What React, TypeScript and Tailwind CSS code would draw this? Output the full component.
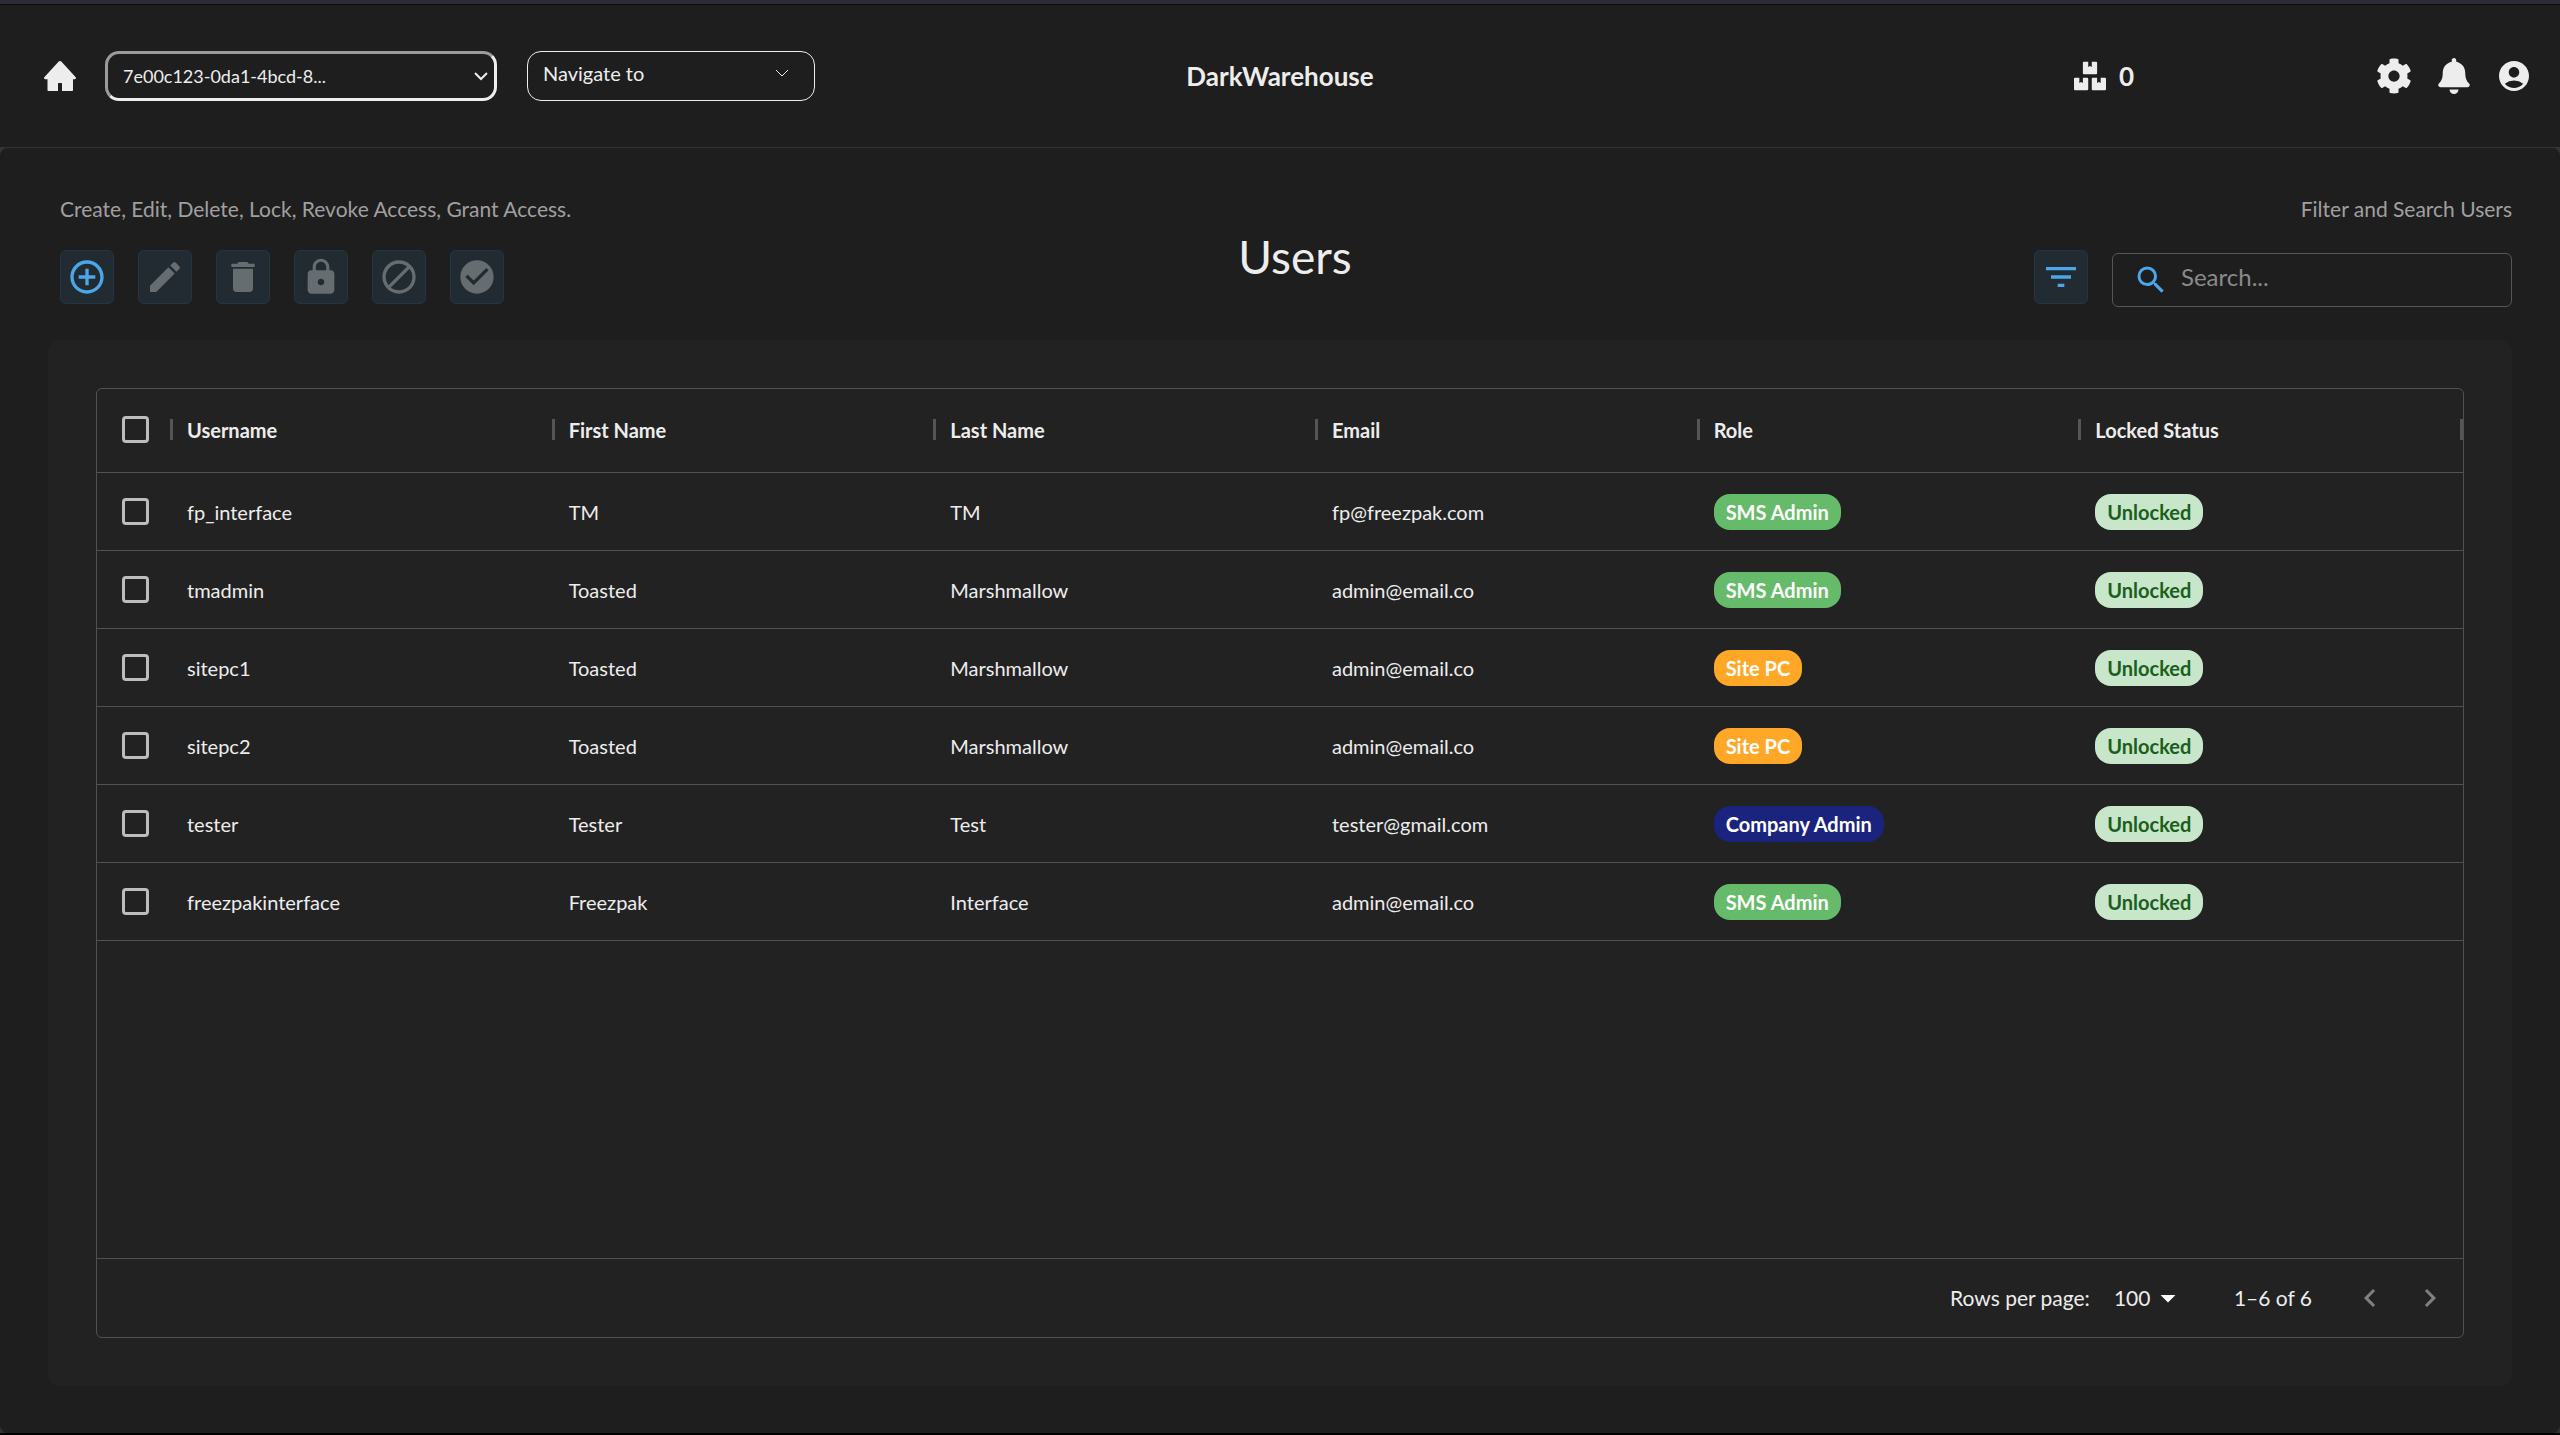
import type { ReactNode } from "react";
import {
  MdAccountCircle,
  MdAddCircleOutline,
  MdArrowDropDown,
  MdBlock,
  MdCheckCircle,
  MdDelete,
  MdEdit,
  MdFilterList,
  MdKeyboardArrowLeft,
  MdKeyboardArrowRight,
  MdLock,
  MdSearch,
} from "react-icons/md";
import { FaBell, FaBoxes, FaCog } from "react-icons/fa";

type Role = "SMS Admin" | "Site PC" | "Company Admin";

interface User {
  username: string;
  firstName: string;
  lastName: string;
  email: string;
  role: Role;
}

const users: User[] = [
  { username: "fp_interface", firstName: "TM", lastName: "TM", email: "fp@freezpak.com", role: "SMS Admin" },
  { username: "tmadmin", firstName: "Toasted", lastName: "Marshmallow", email: "admin@email.co", role: "SMS Admin" },
  { username: "sitepc1", firstName: "Toasted", lastName: "Marshmallow", email: "admin@email.co", role: "Site PC" },
  { username: "sitepc2", firstName: "Toasted", lastName: "Marshmallow", email: "admin@email.co", role: "Site PC" },
  { username: "tester", firstName: "Tester", lastName: "Test", email: "tester@gmail.com", role: "Company Admin" },
  { username: "freezpakinterface", firstName: "Freezpak", lastName: "Interface", email: "admin@email.co", role: "SMS Admin" },
];

const columns = ["Username", "First Name", "Last Name", "Email", "Role", "Locked Status"];

const roleColors: Record<Role, string> = {
  "SMS Admin": "bg-[#66bb6a] text-white",
  "Site PC": "bg-[#ffa726] text-white",
  "Company Admin": "bg-[#1a237e] text-white",
};

const actions: { label: string; icon: ReactNode; enabled?: boolean }[] = [
  { label: "Create user", icon: <MdAddCircleOutline />, enabled: true },
  { label: "Edit user", icon: <MdEdit /> },
  { label: "Delete user", icon: <MdDelete /> },
  { label: "Lock user", icon: <MdLock /> },
  { label: "Revoke access", icon: <MdBlock /> },
  { label: "Grant access", icon: <MdCheckCircle /> },
];

function HomeIcon() {
  return (
    <svg viewBox="0 0 32 30" className="h-[30px] w-8" fill="currentColor" aria-hidden="true">
      <path d="M16 0c.5 0 .9.2 1.3.6l14.2 15.3c.9 1 .5 2.400-.7 2.400H29v10.700c0 .6-.4 1-1 1H18v-7.500c0-.3-.2-.5-.5-.5h-3c-.3 0-.5.2-.5.5V30H4.500c-.6 0-1-.4-1-1V18.300H1.200c-1.200 0-1.600-1.400-.7-2.400L14.700.6C15.100.2 15.500 0 16 0z" />
    </svg>
  );
}

function Chevron({ strokeWidth }: { strokeWidth: number }) {
  return (
    <svg viewBox="0 0 14 9" className="h-[9px] w-[14px]" fill="none" stroke="currentColor" strokeWidth={strokeWidth} aria-hidden="true">
      <path d="M1 1l6 6 6-6" />
    </svg>
  );
}

function Chip({ color, children }: { color: string; children: ReactNode }) {
  return <span className={`inline-flex h-9 items-center rounded-2xl px-3 font-bold ${color}`}>{children}</span>;
}

function Checkbox({ label }: { label: string }) {
  return (
    <input
      type="checkbox"
      aria-label={label}
      className="block size-[27px] appearance-none rounded-[4px] border-3 border-[#bdbdbd] checked:bg-[#42a5f5]"
    />
  );
}

function IconButton({ label, enabled, children }: { label: string; enabled?: boolean; children: ReactNode }) {
  return (
    <button
      type="button"
      aria-label={label}
      disabled={!enabled}
      className="flex size-[54px] items-center justify-center rounded-md border border-[#223642] bg-[#232b32] text-[40px] text-[#4aa8ea] disabled:text-[#666d70]"
    >
      {children}
    </button>
  );
}

function TopBar() {
  return (
    <header className="grid h-[142px] shrink-0 grid-cols-[1fr_auto_1fr] items-center bg-[#1e1e1e] px-7">
      <div className="flex items-center pl-4">
        <a href="#home" aria-label="Home" className="mr-[29px]">
          <HomeIcon />
        </a>
        <div className="relative mr-[30px] w-[392px]">
          <select
            aria-label="Warehouse"
            className="h-[50px] w-full appearance-none rounded-[14px] border-3 border-t-[#9b9b9b] border-r-[#eeeeee] border-b-[#eeeeee] border-l-[#9b9b9b] bg-transparent px-[15px] text-[18px]"
          >
            <option>7e00c123-0da1-4bcd-8...</option>
          </select>
          <span className="pointer-events-none absolute inset-y-0 right-[9px] flex items-center">
            <Chevron strokeWidth={2} />
          </span>
        </div>
        <div className="relative w-[288px]">
          <select
            aria-label="Navigate to"
            className="h-[50px] w-full appearance-none rounded-[14px] border border-[#eeeeee] bg-transparent px-[15px] pb-1.5 text-[20px]"
          >
            <option>Navigate to</option>
          </select>
          <span className="pointer-events-none absolute inset-y-0 right-[26px] flex items-center pb-1.5">
            <Chevron strokeWidth={1} />
          </span>
        </div>
      </div>
      <div className="text-[26px] font-bold">DarkWarehouse</div>
      <div className="flex items-center justify-end gap-6">
        <a href="#inventory" className="mr-[218px] flex items-center gap-[13px] text-[26px] font-bold">
          <FaBoxes className="text-[32px]" />0
        </a>
        <button type="button" aria-label="Settings">
          <FaCog className="text-[36px]" />
        </button>
        <button type="button" aria-label="Notifications">
          <FaBell className="text-[36px]" />
        </button>
        <button type="button" aria-label="Account">
          <MdAccountCircle className="text-[36px]" />
        </button>
      </div>
    </header>
  );
}

function Toolbar() {
  return (
    <div className="flex items-start justify-between pr-12 pl-[60px]">
      <div className="flex w-[496px] flex-col gap-[27px]">
        <p className="text-[21px] leading-7 whitespace-nowrap text-[#a0a0a0]">
          Create, Edit, Delete, Lock, Revoke Access, Grant Access.
        </p>
        <div className="flex gap-6">
          {actions.map((action) => (
            <IconButton key={action.label} label={action.label} enabled={action.enabled}>
              {action.icon}
            </IconButton>
          ))}
        </div>
      </div>
      <h1 className="pt-[34px] text-[46px] leading-14">Users</h1>
      <div className="flex flex-col gap-[27px]">
        <p className="text-right text-[21px] leading-7 text-[#a0a0a0]">Filter and Search Users</p>
        <div className="flex h-[57px] gap-6">
          <IconButton label="Filter" enabled>
            <MdFilterList />
          </IconButton>
          <label className="flex h-[54px] w-[400px] items-center gap-3 self-end rounded-md border border-[#555555] pr-4 pl-5">
            <MdSearch className="text-[36px] text-[#4aa8ea]" />
            <input
              type="search"
              aria-label="Search users"
              placeholder="Search..."
              className="min-w-0 flex-1 bg-transparent pb-1.5 text-[24px] outline-none placeholder:text-[#8a8a8a]"
            />
          </label>
        </div>
      </div>
    </div>
  );
}

function UsersTable() {
  return (
    <table className="w-full table-fixed border-separate border-spacing-0 text-left">
      <colgroup>
        <col className="w-[73px]" />
        {columns.map((column) => (
          <col key={column} />
        ))}
        <col className="w-[3px]" />
      </colgroup>
      <thead>
        <tr className="*:border-b *:border-[#515151] *:pb-0.5">
          <th className="h-[84px] pl-[25px]">
            <Checkbox label="Select all users" />
          </th>
          {columns.map((column) => (
            <th key={column} className="font-bold">
              <div className="flex items-center gap-[14px]">
                <span className="h-[21px] w-[3px] bg-[#555555]" />
                {column}
              </div>
            </th>
          ))}
          <th aria-hidden="true">
            <div className="h-[21px] w-[3px] bg-[#555555]" />
          </th>
        </tr>
      </thead>
      <tbody>
        {users.map((user) => (
          <tr key={user.username} className="*:border-b *:border-[#515151]">
            <td className="h-[78px] pl-[25px]">
              <Checkbox label={`Select ${user.username}`} />
            </td>
            <td className="pl-[17px]">{user.username}</td>
            <td className="pl-[17px]">{user.firstName}</td>
            <td className="pl-[17px]">{user.lastName}</td>
            <td className="pl-[17px]">{user.email}</td>
            <td className="pl-[17px]">
              <Chip color={roleColors[user.role]}>{user.role}</Chip>
            </td>
            <td className="pl-[17px]">
              <Chip color="bg-[#c8e6c9] text-[#1b5e20]">Unlocked</Chip>
            </td>
            <td />
          </tr>
        ))}
      </tbody>
    </table>
  );
}

function TableFooter() {
  return (
    <div className="flex h-[79px] items-center justify-end border-t border-[#515151] pr-[15px] text-[21px]">
      <label htmlFor="rows-per-page" className="mr-6">
        Rows per page:
      </label>
      <div className="relative mr-12 w-[72px]">
        <select id="rows-per-page" className="w-full appearance-none bg-transparent">
          <option>100</option>
        </select>
        <MdArrowDropDown className="pointer-events-none absolute inset-y-0 right-0 my-auto text-[36px] text-white" />
      </div>
      <span className="mr-10">1–6 of 6</span>
      <div className="flex gap-6 text-[36px] text-[#808080]">
        <button type="button" aria-label="Previous page" disabled>
          <MdKeyboardArrowLeft />
        </button>
        <button type="button" aria-label="Next page" disabled>
          <MdKeyboardArrowRight />
        </button>
      </div>
    </div>
  );
}

export default function App() {
  return (
    <div className="flex min-h-screen flex-col border-t-4 border-b-2 border-t-[#2d2a35] border-b-black bg-[#333333] font-['Lato',sans-serif] text-[20px] text-[#ededed]">
      <div className="mb-px border-t border-[#0c0c0c]">
        <TopBar />
      </div>
      <main className="flex flex-1 flex-col rounded-lg bg-[#1e1e1e] pt-[47px] pb-[47px]">
        <Toolbar />
        <section aria-label="Users" className="mx-12 mt-[33px] flex flex-1 flex-col rounded-xl bg-[#222222] p-12">
          <div className="flex flex-1 flex-col rounded-md border border-[#515151]">
            <div className="flex-1">
              <UsersTable />
            </div>
            <TableFooter />
          </div>
        </section>
      </main>
    </div>
  );
}
